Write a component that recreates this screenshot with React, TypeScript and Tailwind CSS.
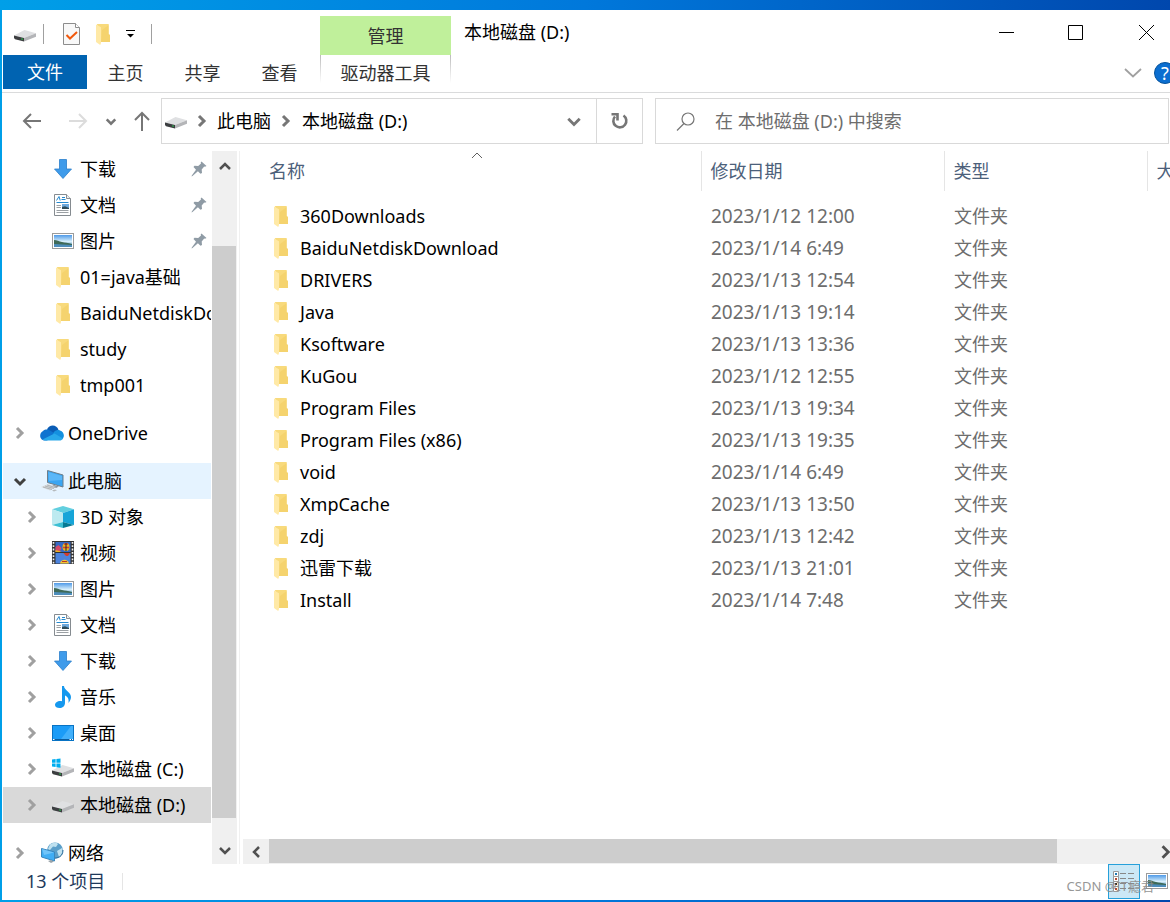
import { useState } from "react";
import type { ReactNode } from "react";

type IconProps = { className?: string };

function FolderIcon({ className = "" }: IconProps) {
  return (
    <svg width="14" height="21" viewBox="0 0 14 21" className={className}>
      <path d="M1 0h11.7v10l1.3 1v7H4.5z" fill="#f8da7c" />
      <path d="M6 6l6.7-5v9L14 11v7H5z" fill="#f3cf66" opacity="0.6" />
      <path d="M0 .5L5 3.3V19l-.8 2L0 18z" fill="#ffe9a6" />
    </svg>
  );
}

function DriveIcon({ windows = false }: { windows?: boolean }) {
  return (
    <svg width="22" height="22" viewBox="0 0 22 22">
      <path d="M0 12.5L10.5 7 22 10.2 10 15z" fill="#dfe0e2" />
      <path d="M10 15l12-4.8v3.6L10 18.5z" fill="#b4b5b8" />
      <path d="M0 12.5L10 15v3.5L1 16.3 0 15z" fill="#3c3e40" />
      <path d="M7.3 15.2l1.4.4v1.3l-1.4-.4z" fill="#27c24c" />
      {windows && (
        <g fill="#00adef">
          <path d="M0 1.6l3.6-.5v3.6H0zM4.4 1L8.5.4v4.3H4.4zM0 5.5h3.6v3.6L0 8.6zM4.4 5.5h4.1v4.3l-4.1-.6z" />
        </g>
      )}
    </svg>
  );
}

function DownloadIcon() {
  return (
    <svg width="22" height="22" viewBox="0 0 22 22">
      <path d="M7.5 1.5h7V11h5L11 20.5 2.5 11h5z" fill="#3f9bea" stroke="#2b7fcb" strokeWidth="0.8" />
    </svg>
  );
}

function DocumentIcon() {
  return (
    <svg width="22" height="22" viewBox="0 0 22 22">
      <path d="M2.5.5h12l4 4v17h-16z" fill="#fff" stroke="#858b90" />
      <path d="M14.5.5v4h4" fill="#eceeef" stroke="#858b90" />
      <path d="M4.5 6.500L7 2.500 8.200 6.500M10 3.500h3M9.500 5.500h4M4.500 8.500h12" stroke="#2489cf" fill="none" />
      <path d="M4.5 11.500H9M4.500 13.500H9M4.500 16.500h12M4.500 18.500h12" stroke="#9ba0a4" />
      <path d="M10 10h7v5h-7z" fill="#6da9dd" />
      <path d="M10 13l3-.8 4 1.800v1h-7z" fill="#2d4b59" />
    </svg>
  );
}

function PictureIcon() {
  return (
    <svg width="22" height="22" viewBox="0 0 22 22">
      <defs>
        <linearGradient id="sky" x1="0" y1="0" x2="0" y2="1">
          <stop offset="0" stopColor="#4f9ae8" />
          <stop offset="0.55" stopColor="#d9f0fb" />
          <stop offset="0.7" stopColor="#9cc6e0" />
          <stop offset="1" stopColor="#3f7fae" />
        </linearGradient>
      </defs>
      <rect x="0.5" y="3.5" width="21" height="15" fill="#fff" stroke="#9b9b9b" />
      <rect x="2" y="5" width="18" height="12" fill="url(#sky)" />
      <path d="M2 10c3 0 5 1.500 8 2s6 1 10 2v1H2z" fill="#3f6a58" />
      <path d="M2 14l9 .5 9 .5v2H2z" fill="#4d8dbb" />
    </svg>
  );
}

function CubeIcon() {
  return (
    <svg width="22" height="22" viewBox="0 0 22 22">
      <path d="M0 3.200L11 0l11 3.200L11 7z" fill="#62cfdf" />
      <path d="M0 3.200L11 7v9L0 19z" fill="#bdeaf0" />
      <path d="M22 3.200L11 7v9l11 3z" fill="#16a5d8" />
      <path d="M0 19l11-3v6z" fill="#3dbfd3" />
      <path d="M22 19l-11-3v6z" fill="#057a94" />
    </svg>
  );
}

function VideoIcon() {
  return (
    <svg width="22" height="24" viewBox="0 0 22 24">
      <path d="M0 0h22v23H0z" fill="#343434" />
      <path d="M3.500 1h15v10h-15z" fill="#3569c4" />
      <path d="M3.500 12h15v10.500h-15z" fill="#4c83dc" />
      <path d="M3.500 6l3-2 3 3-2 4h-4z" fill="#d74a68" />
      <path d="M3.500 9l4 1 2 1h-6z" fill="#e9b521" />
      <ellipse cx="14" cy="6" rx="3.500" ry="4" fill="#e9b521" />
      <path d="M12 3l4 0M11 6.500h6" stroke="#d33e2e" strokeWidth="1.500" />
      <path d="M14 2v8" stroke="#25262b" />
      <path d="M11.500 12h6.500l-2 3h-2z" fill="#d33e2e" />
      <path d="M8 22.500c1-5 8-5 9 0z" fill="#f4c430" />
      <path d="M10 20.500h5" stroke="#b83a2a" />
      <path d="M1.500 1v22M20.500 1v22" stroke="#f1f1f1" strokeWidth="1.600" strokeDasharray="1.800 1.500" />
    </svg>
  );
}

function MusicIcon() {
  return (
    <svg width="22" height="22" viewBox="0 0 22 22">
      <path d="M10 0h2c0 4 7 6 7 11 0 2-1 4-2.500 6 .5-4-.500-6-3.500-7.500V17c0 3-2.500 5-5.500 5C5 22 3 21 3 19c0-2.500 3-4.500 7-3.800z" fill="#1598ee" />
    </svg>
  );
}

function DesktopIcon() {
  return (
    <svg width="22" height="22" viewBox="0 0 22 22">
      <rect x="0.5" y="3.500" width="21" height="15" fill="#1b9cf7" stroke="#0873c4" />
      <path d="M9 17L19 4h2v13z" fill="#41b0fb" />
      <path d="M1 17.500h20" stroke="#0a5d9f" />
      <path d="M1 17.500h1.500M17.500 17.500H19M20 17.500h1" stroke="#fff" />
    </svg>
  );
}

function OneDriveIcon() {
  return (
    <svg width="24" height="16" viewBox="0 0 24 16">
      <path d="M7 4.500C9-1 17-1 18.500 5l-6 4z" fill="#0a5cb5" />
      <path d="M5 15.500C-.5 15.500-1.500 8.500 3 6c2.500-2.500 5.500-1.500 7-.5l7 4.500-10 5.500z" fill="#0f73d0" />
      <path d="M13 8.500c2-3.500 5-4 7-3 4 1 5 6 2.500 8.500L14 11z" fill="#1490df" />
      <path d="M2.500 14.500L14.500 8.500l8.500 5c-.8 1.500-2 2-3.500 2H5.500c-1.200 0-2.200-.3-3-1z" fill="#28a8ea" />
    </svg>
  );
}

function ComputerIcon() {
  return (
    <svg width="24" height="22" viewBox="0 0 24 22">
      <path d="M7.500.5L23 5v12L7.500 12.500z" fill="#3aa5f2" stroke="#6d7d89" />
      <path d="M8.500 2L22 6v4L9 11z" fill="#72c3fb" opacity="0.6" />
      <path d="M14 15l5 1.500-3 1.500-5-1.500z" fill="#8e959b" />
      <path d="M1 17l7-3 8 3-6 3.500z" fill="#d9dcde" />
      <path d="M3 17l9 2.500M5 16l9 2.500M7 15l8 2.500" stroke="#9ca2a6" strokeWidth="0.700" />
      <path d="M12 20.500l3-1 2 .8-3 1.200z" fill="#b5b9bc" />
    </svg>
  );
}

function NetworkIcon() {
  return (
    <svg width="24" height="22" viewBox="0 0 24 22">
      <circle cx="15" cy="8.500" r="8" fill="#5b9fc9" />
      <path d="M10 2.500c3-2.500 7-2 8-.5l-2 3-3-.5-3 3.500-2-1zM17 9l5-3c1 4 0 7-3 9z" fill="#bfe1ef" />
      <path d="M8 12a8 8 0 0015-4" fill="none" stroke="#2e6e9c" />
      <path d="M1.500 6.500l13 3.500v9l-13-4z" fill="#3fadf4" stroke="#3987be" />
      <path d="M2 7l12 3.500L4 13z" fill="#85cdfb" opacity="0.700" />
      <path d="M8 19l3-1 3 1.500-3 1.500z" fill="#9aa3a9" />
    </svg>
  );
}

function PinIcon() {
  return (
    <svg width="16" height="16" viewBox="0 0 16 16" className="shrink-0">
      <path d="M10.500.5l5 4.500-1.500.8-.8-.3-2.500 3 .3 3.500-1.500.8-2.600-2.600L1.500 15 .5 15.500l.3-1L5 8.800 2.500 6l1-1.200 3.700.2 2.800-2.500-.3-1z" fill="#8f9ba5" />
    </svg>
  );
}

type ChevronProps = { dir: "up" | "down" | "left" | "right"; size?: number; width?: number; className?: string };

const chevronPaths = {
  up: "M2 9l5-5 5 5",
  down: "M2 5l5 5 5-5",
  left: "M10 2L5 7l5 5",
  right: "M4 2l5 5-5 5",
};

function Chevron({ dir, size = 14, width = 2.5, className = "" }: ChevronProps) {
  return (
    <svg width={size} height={size} viewBox="0 0 14 14" fill="none" stroke="currentColor" strokeWidth={width} className={`shrink-0 ${className}`}>
      <path d={chevronPaths[dir]} />
    </svg>
  );
}

const quickAccess = [
  { label: "下载", icon: <DownloadIcon />, pinned: true },
  { label: "文档", icon: <DocumentIcon />, pinned: true },
  { label: "图片", icon: <PictureIcon />, pinned: true },
  { label: "01=java基础", icon: <FolderIcon />, pinned: false },
  { label: "BaiduNetdiskDownload", icon: <FolderIcon />, pinned: false },
  { label: "study", icon: <FolderIcon />, pinned: false },
  { label: "tmp001", icon: <FolderIcon />, pinned: false },
];

const computerItems = [
  { label: "3D 对象", icon: <CubeIcon /> },
  { label: "视频", icon: <VideoIcon /> },
  { label: "图片", icon: <PictureIcon /> },
  { label: "文档", icon: <DocumentIcon /> },
  { label: "下载", icon: <DownloadIcon /> },
  { label: "音乐", icon: <MusicIcon /> },
  { label: "桌面", icon: <DesktopIcon /> },
  { label: "本地磁盘 (C:)", icon: <DriveIcon windows /> },
  { label: "本地磁盘 (D:)", icon: <DriveIcon /> },
];

const files = [
  { name: "360Downloads", date: "2023/1/12 12:00" },
  { name: "BaiduNetdiskDownload", date: "2023/1/14 6:49" },
  { name: "DRIVERS", date: "2023/1/13 12:54" },
  { name: "Java", date: "2023/1/13 19:14" },
  { name: "Ksoftware", date: "2023/1/13 13:36" },
  { name: "KuGou", date: "2023/1/12 12:55" },
  { name: "Program Files", date: "2023/1/13 19:34" },
  { name: "Program Files (x86)", date: "2023/1/13 19:35" },
  { name: "void", date: "2023/1/14 6:49" },
  { name: "XmpCache", date: "2023/1/13 13:50" },
  { name: "zdj", date: "2023/1/13 12:42" },
  { name: "迅雷下载", date: "2023/1/13 21:01" },
  { name: "Install", date: "2023/1/14 7:48" },
];

function TitleBar() {
  return (
    <header className="flex h-[45px] shrink-0">
      <div className="flex w-[318px] shrink-0 items-center pt-[3px] pl-3">
        <DriveIcon />
        <span className="ml-[7px] h-5 w-px bg-[#a0a0a0]" />
        <button aria-label="属性" className="ml-[19px]">
          <svg width="17" height="22" viewBox="0 0 17 22">
            <path d="M.5.5h12l4 4v17H.5z" fill="#f8f8f8" stroke="#8c8c8c" />
            <path d="M12.500.5v4h4" fill="#fff" stroke="#8c8c8c" />
            <path d="M3.500 12l3.500 3.500L14 9" fill="none" stroke="#f1580c" strokeWidth="2" />
          </svg>
        </button>
        <button aria-label="新建文件夹" className="ml-4">
          <FolderIcon />
        </button>
        <button aria-label="自定义快速访问工具栏" className="ml-4">
          <svg width="9" height="9" viewBox="0 0 9 9">
            <path d="M0 .5h9" stroke="#000" />
            <path d="M1 4h7L4.500 7.500z" />
          </svg>
        </button>
        <span className="ml-4 h-5 w-px bg-[#a0a0a0]" />
      </div>
      <div className="mt-1.5 flex w-[131px] shrink-0 items-center justify-center bg-[#c0f09b] text-[#333]">管理</div>
      <h1 className="flex-1 pt-[10px] pl-[13px]">本地磁盘 (D:)</h1>
      <div className="flex items-center">
        <button aria-label="最小化" className="flex w-[70px] justify-center">
          <svg width="15" height="15" viewBox="0 0 15 15" stroke="#000"><path d="M0 7.500h15" /></svg>
        </button>
        <button aria-label="最大化" className="flex w-[68px] justify-center">
          <svg width="15" height="15" viewBox="0 0 15 15" fill="none" stroke="#000"><path d="M.5.5h14v14H.5z" /></svg>
        </button>
        <button aria-label="关闭" className="flex w-[61px] justify-end pr-4">
          <svg width="15" height="15" viewBox="0 0 15 15" stroke="#000"><path d="M0 0l15 15M15 0L0 15" /></svg>
        </button>
      </div>
    </header>
  );
}

function Ribbon() {
  return (
    <nav className="flex h-[38px] shrink-0 items-start overflow-hidden border-b border-[#dadbdc] pl-px text-[#333]">
      <button className="h-[34px] w-[84px] shrink-0 bg-[#0063b1] text-white">文件</button>
      {["主页", "共享", "查看"].map((tab) => (
        <button key={tab} className="h-9 w-[77px] shrink-0">{tab}</button>
      ))}
      <span className="ml-[2px] h-7 w-px bg-linear-to-b from-[#bbb] to-white" />
      <button className="h-9 w-[129px] shrink-0">驱动器工具</button>
      <span className="h-7 w-px bg-linear-to-b from-[#bbb] to-white" />
      <span className="flex-1" />
      <button aria-label="展开功能区" className="flex h-9 shrink-0 items-center text-[#a0a0a0]">
        <svg width="18" height="10" viewBox="0 0 18 10" fill="none" stroke="currentColor" strokeWidth="1.800"><path d="M1 1l8 7.500L17 1" /></svg>
      </button>
      <button aria-label="帮助" className="mt-[7px] -mr-1.5 ml-3 flex size-[22px] shrink-0 items-center justify-center rounded-full border border-[#07539b] bg-[#0b6ed0] text-[18px] text-white">
        ?
      </button>
    </nav>
  );
}

function AddressBar() {
  return (
    <div className="flex shrink-0 pt-[5px] pr-px pb-[7px] text-[#767676]">
      <div className="flex w-[159px] shrink-0 items-center pl-5">
        <button aria-label="后退">
          <svg width="20" height="18" viewBox="0 0 20 18" fill="none" stroke="#767676" strokeWidth="2"><path d="M19 9H2M9 2L2 9l7 7" /></svg>
        </button>
        <button aria-label="前进" className="ml-[26px]">
          <svg width="20" height="18" viewBox="0 0 20 18" fill="none" stroke="#dcdcdc" strokeWidth="2"><path d="M1 9h17M11 2l7 7-7 7" /></svg>
        </button>
        <button aria-label="最近浏览的位置" className="ml-[17px]">
          <Chevron dir="down" size={12} width={3} />
        </button>
        <button aria-label="上移" className="ml-4">
          <svg width="18" height="20" viewBox="0 0 18 20" fill="none" stroke="#767676" strokeWidth="2"><path d="M9 20V2M2 9l7-7 7 7" /></svg>
        </button>
      </div>
      <div className="flex h-[46px] flex-[477] items-center border border-[#d9d9d9] pl-[3px]">
        <DriveIcon />
        <Chevron dir="right" width={3} className="ml-2" />
        <button className="ml-2 text-black">此电脑</button>
        <Chevron dir="right" width={3} className="ml-2" />
        <button className="ml-[9px] text-black">本地磁盘 (D:)</button>
        <button aria-label="以前的位置" className="mr-[14px] ml-auto">
          <Chevron dir="down" size={16} />
        </button>
        <button aria-label="刷新" className="flex h-full w-[46px] items-center justify-center border-l border-[#d9d9d9]">
          <svg width="18" height="18" viewBox="0 0 18 18" fill="none" stroke="#767676" strokeWidth="2.600">
            <path d="M12.500 3.500a6.500 6.500 0 11-8.500 1" />
            <path d="M.5 2.300H6.500V8.500" />
          </svg>
        </button>
      </div>
      <label className="ml-3 flex h-[46px] flex-[492] items-center border border-[#d9d9d9] pl-5">
        <svg width="19" height="19" viewBox="0 0 19 19" fill="none" stroke="#767676" strokeWidth="1.200" className="shrink-0">
          <circle cx="12" cy="7" r="6" />
          <path d="M8 11.500L1 18.500" />
        </svg>
        <input type="text" aria-label="搜索" placeholder="在 本地磁盘 (D:) 中搜索" className="ml-5 min-w-0 flex-1 outline-none placeholder:text-[#6d6d6d]" />
      </label>
    </div>
  );
}

type TreeRowProps = { label: string; icon: ReactNode; level?: number; open?: boolean; pinned?: boolean; leaf?: boolean; className?: string; onClick?: () => void };

function TreeRow({ label, icon, level = 1, open, pinned, leaf, className = "", onClick }: TreeRowProps) {
  return (
    <button onClick={onClick} className={`flex h-9 w-full shrink-0 items-center text-left whitespace-nowrap ${level ? "pl-[22px]" : "pl-[10px]"} ${className}`}>
      <span className="flex w-[14px] shrink-0 text-[#a0a0a0]">
        {!leaf && (open ? <Chevron dir="down" width={3} className="text-[#404040]" /> : <Chevron dir="right" width={3} />)}
      </span>
      <span className={`ml-3 flex shrink-0 justify-center ${level ? "w-6" : "w-[25px]"}`}>{icon}</span>
      <span className={`min-w-0 flex-1 overflow-hidden ${level ? "ml-[5px]" : "ml-1"}`}>{label}</span>
      {pinned && <span className="mr-1"><PinIcon /></span>}
    </button>
  );
}

function Sidebar() {
  const [selected, setSelected] = useState("本地磁盘 (D:)");
  return (
    <aside className="flex w-[238px] shrink-0 border-r border-[#f0f0f0] pl-px">
      <div className="flex min-w-0 flex-1 flex-col overflow-hidden">
        {quickAccess.map((item) => (
          <TreeRow key={item.label} label={item.label} icon={item.icon} pinned={item.pinned} leaf />
        ))}
        <TreeRow label="OneDrive" icon={<OneDriveIcon />} level={0} className="mt-3" />
        <TreeRow label="此电脑" icon={<ComputerIcon />} level={0} open className="mt-3 bg-[#e5f3ff]" />
        {computerItems.map((item) => (
          <TreeRow
            key={item.label}
            label={item.label}
            icon={item.icon}
            className={item.label === selected ? "bg-[#d9d9d9]" : ""}
            onClick={() => setSelected(item.label)}
          />
        ))}
        <TreeRow label="网络" icon={<NetworkIcon />} level={0} className="mt-3" />
      </div>
      <div className="mr-[2px] ml-px flex w-[25px] shrink-0 flex-col items-center bg-[#f0f0f0] text-[#505050]">
        <button aria-label="向上滚动" className="flex h-8 items-center"><Chevron dir="up" /></button>
        <div className="h-[63px] shrink-0" />
        <div className="mr-px w-6 flex-1 bg-[#cdcdcd]" />
        <button aria-label="向下滚动" className="mt-[18px] flex h-7 items-center"><Chevron dir="down" /></button>
      </div>
    </aside>
  );
}

function FileList() {
  return (
    <main className="flex min-w-0 flex-1 flex-col">
      <div className="flex-1 overflow-hidden">
        <table className="w-full table-fixed border-collapse text-left whitespace-nowrap">
          <colgroup>
            <col />
            <col className="w-[243px]" />
            <col className="w-[203px]" />
            <col className="w-[23px]" />
          </colgroup>
          <thead className="text-[#4c607a]">
            <tr className="h-10">
              <th className="relative pl-[29px] font-normal">
                名称
                <Chevron dir="up" width={1} className="absolute -top-0.5 left-1/2 text-[#606060]" />
              </th>
              <th className="border-l border-[#e5e5e5] pl-[9px] font-normal">修改日期</th>
              <th className="border-l border-[#e5e5e5] pl-[9px] font-normal">类型</th>
              <th className="overflow-hidden border-l border-[#e5e5e5] pl-[9px] font-normal">大小</th>
            </tr>
          </thead>
          <tbody>
            <tr className="h-[9px]" aria-hidden="true" />
            {files.map((file) => (
              <tr key={file.name} className="h-8 text-[#6d6d6d]">
                <td className="pl-[34px] text-black">
                  <span className="flex items-center">
                    <FolderIcon />
                    <span className="ml-3">{file.name}</span>
                  </span>
                </td>
                <td className="pl-[10px] text-[19px]">{file.date}</td>
                <td className="pl-[10px]">文件夹</td>
                <td />
              </tr>
            ))}
          </tbody>
        </table>
      </div>
      <div className="ml-[3px] flex h-[25px] shrink-0 items-start overflow-hidden bg-[#f0f0f0] text-[#505050]">
        <button aria-label="向左滚动" className="flex h-full w-[26px] shrink-0 items-center justify-center"><Chevron dir="left" /></button>
        <div className="h-6 flex-1 bg-[#cdcdcd]" />
        <button aria-label="向右滚动" className="-mr-1 ml-[101px] flex h-full shrink-0 items-center"><Chevron dir="right" size={16} /></button>
      </div>
    </main>
  );
}

function StatusBar() {
  return (
    <footer className="relative flex h-9 shrink-0 items-start pr-[2px] text-[#1e395b]">
      <p className="pt-[5px] pl-6">13 个项目</p>
      <span className="mt-[9px] ml-[17px] h-[17px] w-px bg-[#e5e5e5]" />
      <button aria-label="详细信息" className="ml-auto flex h-[35px] w-8 items-center justify-center border border-[#26a0da] bg-[#cce8f6]">
        <svg width="22" height="22" viewBox="0 0 22 22" fill="none">
          <path d="M.5.5h5v5h-5zM.5 5.500h5v5h-5zM.5 10.500h5v5h-5zM.5 15.500h5v5h-5z" fill="#fff" stroke="#9a9a9a" />
          <path d="M2 3h2" stroke="#207ab5" strokeWidth="2" />
          <path d="M2 8h2M2 18h2" stroke="#b34b32" strokeWidth="2" />
          <path d="M2 13h2" stroke="#303030" strokeWidth="2" />
          <path d="M7 2.500h6M15 2.500h6M7 7.500h6M15 7.500h6M7 12.500h6M15 12.500h6M7 17.500h6M15 17.500h6" stroke="#888" />
        </svg>
      </button>
      <button aria-label="大缩略图" className="mt-1.5 ml-[6px]"><PictureIcon /></button>
      <span className="absolute right-4 bottom-0.5 text-[13px] text-[#8c8c8c] opacity-90">CSDN @IT瘾君</span>
    </footer>
  );
}

export default function App() {
  return (
    <div className="flex h-screen flex-col overflow-hidden bg-linear-to-r from-[#009fe8] via-[#0078db] to-[#0047ad] pt-[10px] pb-[2px] pl-[2px] font-['Noto_Sans','Noto_Sans_CJK_SC',sans-serif] text-[18px] leading-6 text-black">
      <div className="flex min-h-0 flex-1 flex-col bg-white">
        <TitleBar />
        <Ribbon />
        <AddressBar />
        <div className="flex min-h-0 flex-1">
          <Sidebar />
          <FileList />
        </div>
        <StatusBar />
      </div>
    </div>
  );
}
